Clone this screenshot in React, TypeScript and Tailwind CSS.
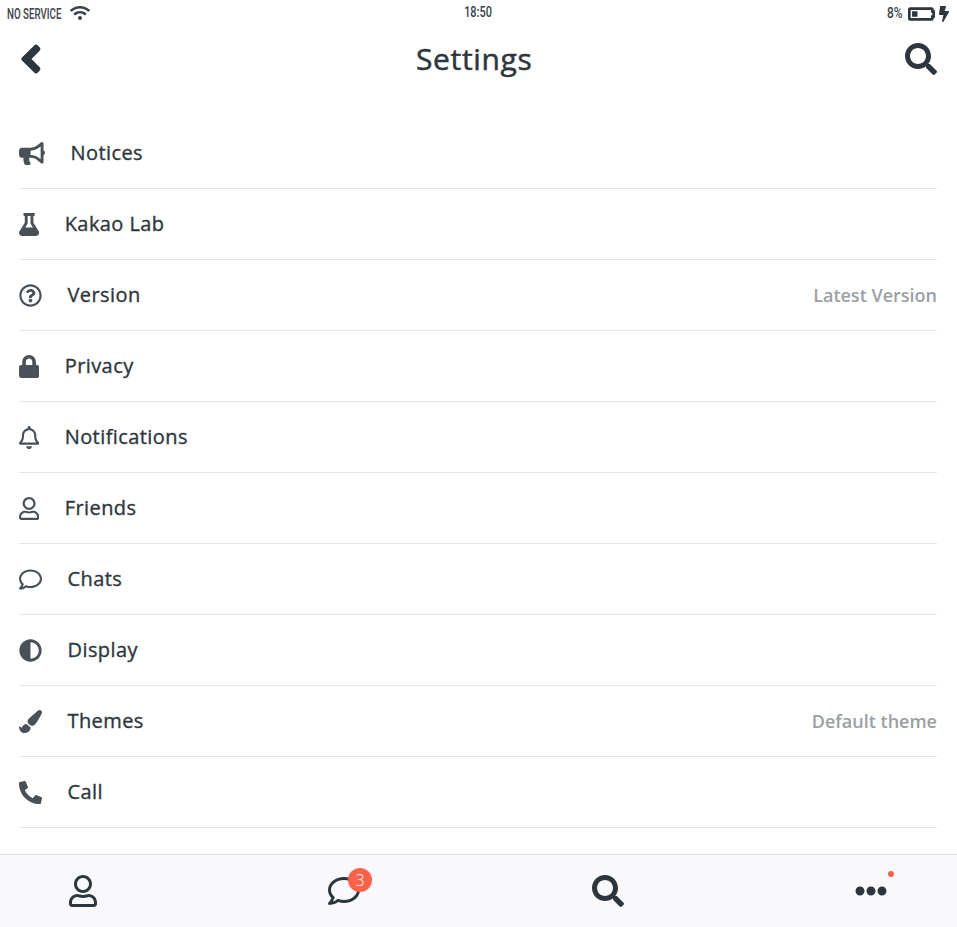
import type { ReactNode } from "react";
import type { IconType } from "react-icons";
import {
  FaAdjust,
  FaBatteryQuarter,
  FaBolt,
  FaBullhorn,
  FaEllipsisH,
  FaFlask,
  FaLock,
  FaPaintBrush,
  FaPhoneAlt,
  FaRegBell,
  FaRegComment,
  FaRegQuestionCircle,
  FaRegUser,
  FaSearch,
  FaWifi,
} from "react-icons/fa";

type Row = { icon: IconType; width: string; label: string; note?: string };

const rows: Row[] = [
  { icon: FaBullhorn, width: "w-[26px]", label: "Notices" },
  { icon: FaFlask, width: "w-[20.2px]", label: "Kakao Lab" },
  { icon: FaRegQuestionCircle, width: "w-[23px]", label: "Version", note: "Latest Version" },
  { icon: FaLock, width: "w-[20.2px]", label: "Privacy" },
  { icon: FaRegBell, width: "w-[20.2px]", label: "Notifications" },
  { icon: FaRegUser, width: "w-[20.2px]", label: "Friends" },
  { icon: FaRegComment, width: "w-[23px]", label: "Chats" },
  { icon: FaAdjust, width: "w-[23px]", label: "Display" },
  { icon: FaPaintBrush, width: "w-[23px]", label: "Themes", note: "Default theme" },
  { icon: FaPhoneAlt, width: "w-[23px]", label: "Call" },
];

function StatusText({ className, children }: { className: string; children: ReactNode }) {
  return (
    <span className={`block whitespace-nowrap font-['Roboto',sans-serif] text-[15px] leading-4 font-medium ${className}`}>
      {children}
    </span>
  );
}

function BackIcon() {
  return (
    <svg viewBox="0 0 22 32" className="h-8 w-[22px]" fill="currentColor">
      <path d="M1.7 14.8 14.4 2.2Q15.9.7 17.4 2.1L19.8 4.5Q21.2 5.9 19.9 7.4L11.5 16l8.4 8.6q1.3 1.5-.1 2.9l-2.4 2.4q-1.5 1.4-3-.1L1.7 17.2q-1.1-1.2 0-2.4Z" />
    </svg>
  );
}

function StatusBar() {
  return (
    <div className="flex h-[27px] items-start justify-between pl-[7px] pr-2 text-[#3a424a]">
      <div className="flex w-[200px] items-center pt-[5px]">
        <div className="w-[62.5px]">
          <StatusText className="origin-left translate-y-px scale-x-[0.65]">NO SERVICE</StatusText>
        </div>
        <FaWifi className="h-4 w-5" />
      </div>
      <div className="flex w-[28px] justify-center pt-1">
        <StatusText className="scale-x-[0.73]">18:50</StatusText>
      </div>
      <div className="flex w-[200px] items-center justify-end pt-[5px]">
        <StatusText className="origin-right scale-x-[0.8]">8%</StatusText>
        <FaBatteryQuarter className="-my-1 ml-[5px] h-[22px] w-[27px] translate-y-px text-[#2d363d]" />
        <FaBolt className="ml-1 h-4 w-[10px] translate-y-px text-[#2d363d]" />
      </div>
    </div>
  );
}

export default function App() {
  return (
    <div className="flex h-[927px] w-[957px] flex-col overflow-hidden bg-white font-['Open_Sans',sans-serif] text-[#2d363d]">
      <StatusBar />
      <header className="flex h-16 shrink-0 items-center justify-between px-5">
        <BackIcon />
        <h1 className="pl-[1.5px] text-[30px] leading-9 font-normal tracking-[0.65px] [-webkit-text-stroke:0.5px_currentColor]">
          Settings
        </h1>
        <FaSearch className="h-8 w-8" />
      </header>
      <main className="min-h-0 flex-1 overflow-hidden pt-[27px] pr-5 pl-[19px]">
        {rows.map(({ icon: Icon, width, label, note }) => (
          <div key={label} className="flex h-[71px] items-center border-b border-[#e6e6e6]">
            <Icon className={`mt-px h-[23px] shrink-0 text-[#4a5058] ${width}`} />
            <span className="ml-[25.5px] text-[20px] leading-7 font-normal tracking-[0.42px] [-webkit-text-stroke:0.35px_currentColor]">
              {label}
            </span>
            {note && <span className="ml-auto text-[18px] leading-7 font-semibold text-[#9b9fa3]">{note}</span>}
          </div>
        ))}
      </main>
      <nav className="flex h-[73px] shrink-0 items-center justify-between border-t border-[#dedede] bg-[#f9f9fb] pr-[70px] pl-[67px]">
        <FaRegUser className="h-8 w-8" />
        <div className="relative mr-[1.5px] -ml-[1.5px]">
          <FaRegComment className="h-8 w-8" />
          <span className="absolute -top-[7px] left-5 flex h-6 w-6 items-center justify-center rounded-full bg-[#fc6249] text-base leading-6 font-light text-white">
            3
          </span>
        </div>
        <FaSearch className="h-8 w-8" />
        <div className="relative">
          <FaEllipsisH className="h-8 w-8" />
          <span className="absolute -top-1 left-[33px] h-1.5 w-1.5 rounded-full bg-[#fc6249]" />
        </div>
      </nav>
    </div>
  );
}
